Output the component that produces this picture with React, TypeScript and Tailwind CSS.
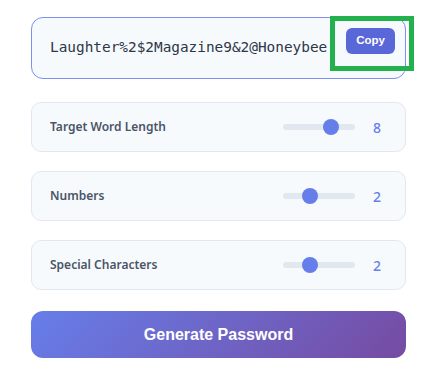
import { useState } from 'react'

interface Setting {
  label: string
  value: number
  min: number
  max: number
}

const SETTINGS: Setting[] = [
  { label: 'Target Word Length', value: 8, min: 3, max: 10 },
  { label: 'Numbers', value: 2, min: 1, max: 4 },
  { label: 'Special Characters', value: 2, min: 1, max: 4 },
]

function Slider({ value, min, max }: { value: number; min: number; max: number }) {
  // thumb centre travels 56px along the 72px track
  const left = ((value - min) / (max - min)) * 56
  return (
    <div className="relative w-[72px] h-[6px] rounded-full bg-[#e2e8f0]">
      <div
        className="absolute top-[-5px] w-4 h-4 rounded-full bg-[#667eea]"
        style={{ left }}
      />
    </div>
  )
}

export default function App() {
  const [password] = useState('Laughter%2$2Magazine9&2@Honeybee')

  return (
    <div className="w-[439px] h-[373px] bg-white pt-[17px] pl-[31px] font-['Noto_Sans',sans-serif]">
      <div className="w-[375px]">
        {/* Password output */}
        <div className="relative h-[62px] flex items-center pl-[18px] bg-[#f7fafc] border border-[#7d8ef0] rounded-xl">
          <span className="font-['DejaVu_Sans_Mono',monospace] text-[14.4px] text-[#2d3748] whitespace-nowrap">
            {password}
          </span>
          <button className="absolute top-[10px] right-[10px] w-[49px] h-[26px] rounded-md bg-[#5a67d8] text-white text-[11.5px] font-bold font-['Liberation_Sans',Arial,sans-serif]">
            Copy
          </button>
          {/* highlight box */}
          <div className="absolute top-[-2px] left-[298px] w-[84px] h-[55px] border-[5px] border-[#22b14c] pointer-events-none" />
        </div>

        {/* Settings */}
        <div className="mt-[23px] flex flex-col gap-[19px]">
          {SETTINGS.map((s) => (
            <div
              key={s.label}
              className="h-[50px] flex items-center pl-[18px] pr-[18px] bg-[#f7fafc] border border-[#e2e8f0] rounded-[10px]"
            >
              <span className="flex-1 text-[12px] font-semibold text-[#4a5568]">{s.label}</span>
              <Slider value={s.value} min={s.min} max={s.max} />
              <span className="ml-[12px] w-[20px] text-center text-[14px] font-medium text-[#667eea]">
                {s.value}
              </span>
            </div>
          ))}
        </div>

        <button className="mt-[21px] w-full h-[47px] rounded-xl bg-[linear-gradient(135deg,#667eea_0%,#764ba2_100%)] text-white text-[16px] font-bold font-['Liberation_Sans',Arial,sans-serif]">
          Generate Password
        </button>
      </div>
    </div>
  )
}
